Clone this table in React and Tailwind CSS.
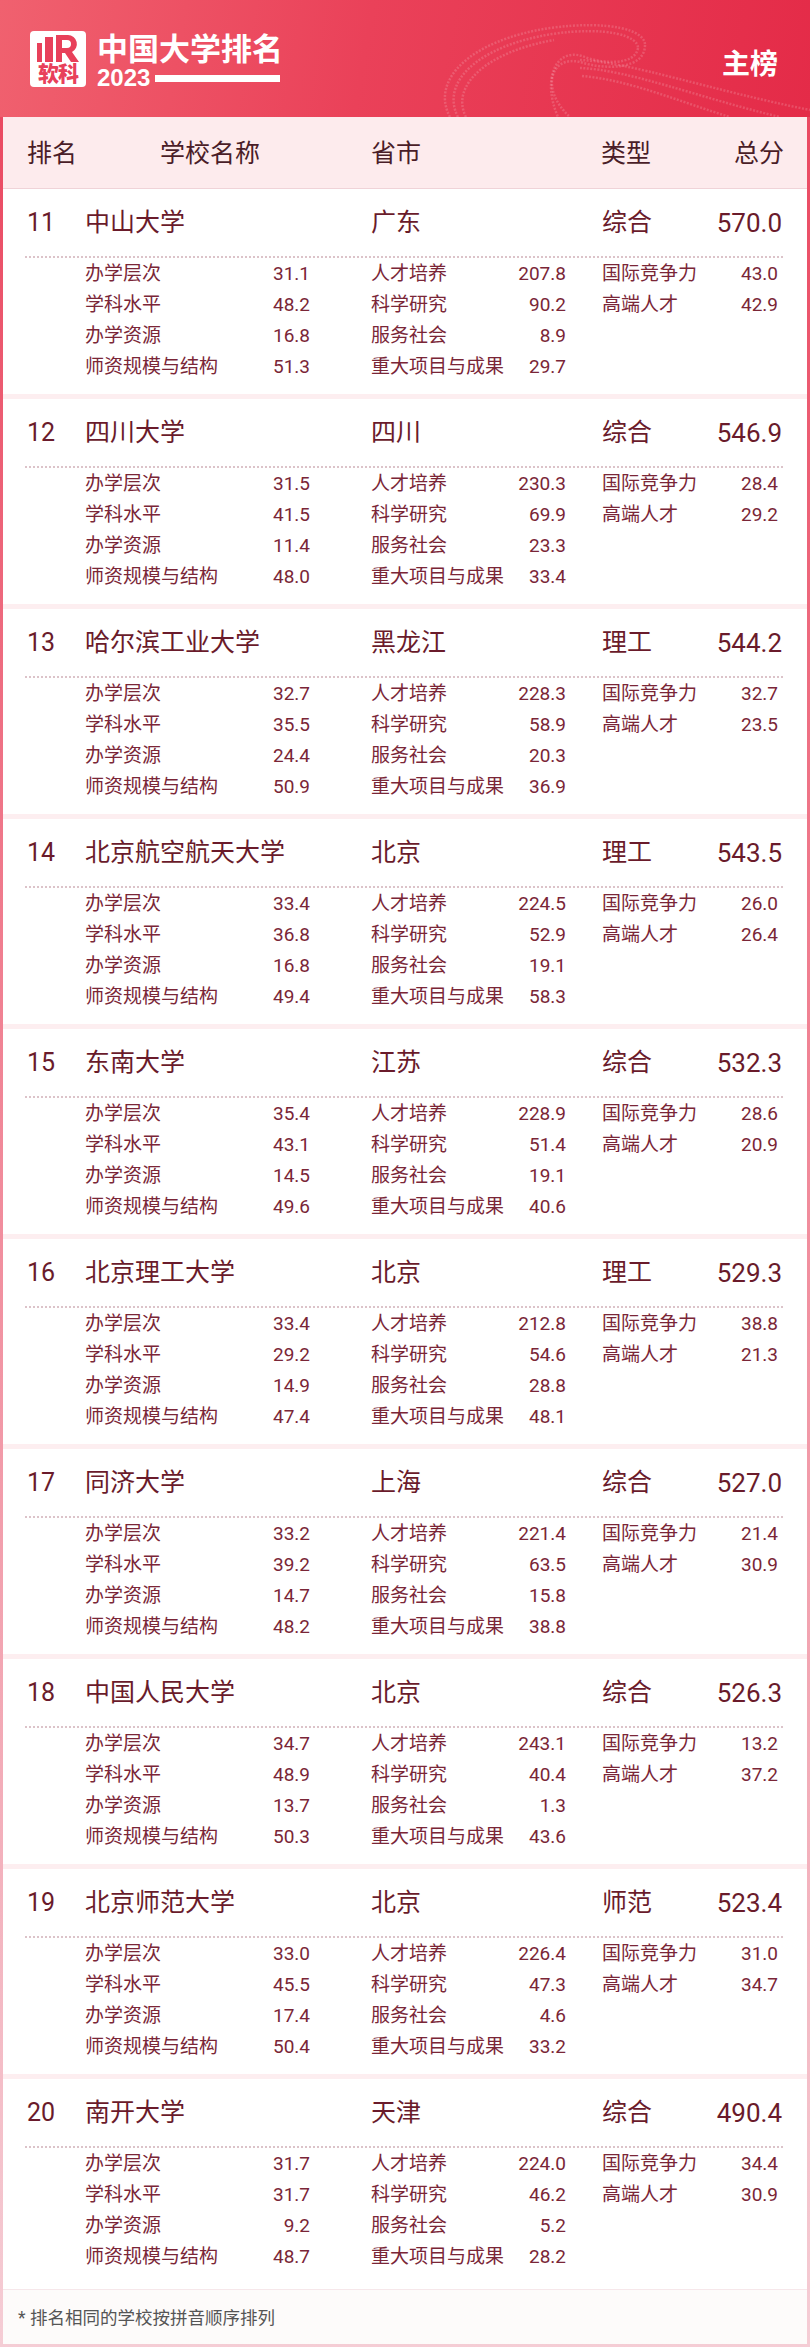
import React from 'react';

const rows = [
  ['11', '中山大学', '广东', '综合', '570.0', ['31.1', '48.2', '16.8', '51.3'], ['207.8', '90.2', '8.9', '29.7'], ['43.0', '42.9']],
  ['12', '四川大学', '四川', '综合', '546.9', ['31.5', '41.5', '11.4', '48.0'], ['230.3', '69.9', '23.3', '33.4'], ['28.4', '29.2']],
  ['13', '哈尔滨工业大学', '黑龙江', '理工', '544.2', ['32.7', '35.5', '24.4', '50.9'], ['228.3', '58.9', '20.3', '36.9'], ['32.7', '23.5']],
  ['14', '北京航空航天大学', '北京', '理工', '543.5', ['33.4', '36.8', '16.8', '49.4'], ['224.5', '52.9', '19.1', '58.3'], ['26.0', '26.4']],
  ['15', '东南大学', '江苏', '综合', '532.3', ['35.4', '43.1', '14.5', '49.6'], ['228.9', '51.4', '19.1', '40.6'], ['28.6', '20.9']],
  ['16', '北京理工大学', '北京', '理工', '529.3', ['33.4', '29.2', '14.9', '47.4'], ['212.8', '54.6', '28.8', '48.1'], ['38.8', '21.3']],
  ['17', '同济大学', '上海', '综合', '527.0', ['33.2', '39.2', '14.7', '48.2'], ['221.4', '63.5', '15.8', '38.8'], ['21.4', '30.9']],
  ['18', '中国人民大学', '北京', '综合', '526.3', ['34.7', '48.9', '13.7', '50.3'], ['243.1', '40.4', '1.3', '43.6'], ['13.2', '37.2']],
  ['19', '北京师范大学', '北京', '师范', '523.4', ['33.0', '45.5', '17.4', '50.4'], ['226.4', '47.3', '4.6', '33.2'], ['31.0', '34.7']],
  ['20', '南开大学', '天津', '综合', '490.4', ['31.7', '31.7', '9.2', '48.7'], ['224.0', '46.2', '5.2', '28.2'], ['34.4', '30.9']],
];

const labels1 = ['办学层次', '学科水平', '办学资源', '师资规模与结构'];
const labels2 = ['人才培养', '科学研究', '服务社会', '重大项目与成果'];
const labels3 = ['国际竞争力', '高端人才'];

const font = { fontFamily: '"Roboto", "Noto Sans CJK SC", sans-serif' };

function Logo() {
  return (
    <div className="w-[56px] h-[56px] bg-white rounded-[4px] flex flex-col items-center pt-[4px]">
      <svg width="46" height="27" viewBox="0 0 46 27">
        <rect x="2" y="8" width="5" height="19" fill="#e8405a" />
        <rect x="10" y="2" width="8" height="25" fill="#e8405a" />
        <path d="M21 0 h12 a9 9 0 0 1 4 17 l7 10 h-8 l-6 -9 h-3 v9 h-6 z M27 5 v8 h5 a4 4 0 0 0 0 -8 z" fill="#e8405a" fillRule="evenodd" />
      </svg>
      <div className="text-[21px] leading-[24px] font-black text-[#e8405a] tracking-[-1px]">软科</div>
    </div>
  );
}

function Ribbon() {
  return (
    <svg className="absolute left-[430px] top-0" width="380" height="117" viewBox="0 0 380 117">
      <g fill="none" stroke="rgba(255,255,255,0.16)" strokeWidth="2.5" strokeDasharray="2 1.5">
        <path d="M20 117 C 0 80, 40 40, 120 28 C 180 20, 215 30, 215 45" />
        <path d="M28 117 C 10 82, 48 46, 122 34 C 178 26, 208 36, 208 48" />
        <path d="M36 117 C 20 86, 56 52, 124 40" />
        <path d="M215 45 C 215 70, 175 70, 150 62 C 120 55, 110 90, 140 117" />
        <path d="M208 48 C 205 66, 172 64, 152 56 C 125 48, 112 80, 128 117" />
        <path d="M150 60 C 200 62, 280 90, 380 110" />
        <path d="M150 68 C 200 70, 270 98, 350 117" />
        <path d="M152 76 C 200 80, 250 102, 300 117" />
      </g>
    </svg>
  );
}

function Detail({ labels, values, w }) {
  return (
    <div className={w}>
      {labels.map((l, i) =>
        values[i] !== undefined ? (
          <div key={l} className="flex justify-between h-[31px] leading-[31px] items-center">
            <span>{l}</span>
            <span>{values[i]}</span>
          </div>
        ) : null
      )}
    </div>
  );
}

export default function App() {
  return (
    <div className="w-[810px] bg-[linear-gradient(180deg,#e9425b,#f07d8f_40%,#f5cdd5)] px-[3px] pb-[3px]" style={font}>
      <header className="-mx-[3px] h-[117px] relative overflow-hidden bg-[linear-gradient(100deg,#f0616f,#ea4159_45%,#e42b48)] flex items-start justify-between px-[30px] pt-[31px]">
        <Ribbon />
        <div className="relative flex gap-[11px]">
          <Logo />
          <div className="flex flex-col text-white font-bold">
            <div className="text-[31px] leading-[32px] mt-[3px]">中国大学排名</div>
            <div className="flex items-center gap-[5px]">
              <span className="text-[24px] leading-[24px] font-bold" style={{ fontFamily: '"Liberation Sans", sans-serif' }}>2023</span>
              <span className="w-[125px] h-[7px] bg-white"></span>
            </div>
          </div>
        </div>
        <div className="relative text-white text-[28px] font-bold mt-[13px] mr-[2px]">主榜</div>
      </header>

      <div className="bg-white">
        <div className="h-[72px] pt-[3px] bg-[#fdebed] border-b border-[#f0d3d8] grid grid-cols-[133px_211px_230px_1fr_auto] items-center pl-[24px] pr-[23px] text-[25px] leading-[32px] text-[#4a1d28]">
          <span>排名</span>
          <span>学校名称</span>
          <span>省市</span>
          <span>类型</span>
          <span>总分</span>
        </div>

        {rows.map((r, idx) => (
          <div key={r[0]}>
            <div className={idx === rows.length - 1 ? 'pt-[18px] pb-[17px]' : 'pt-[18px] pb-[12px]'}>
              <div className="grid grid-cols-[58px_286px_231px_1fr_auto] items-center h-[32px] leading-[32px] pl-[24px] pr-[25px] text-[25px] text-[#6a1b2b]">
                <span>{r[0]}</span>
                <span>{r[1]}</span>
                <span>{r[2]}</span>
                <span>{r[3]}</span>
                <span className="text-[26px]">{r[4]}</span>
              </div>
              <div className="mt-[17px] ml-[22px] mr-[24px] border-t-2 border-dotted border-[#dcc3c9]"></div>
              <div className="flex pl-[82px] text-[19px] text-[#7a2637]">
                <Detail labels={labels1} values={r[5]} w="w-[225px]" />
                <div className="w-[61px]"></div>
                <Detail labels={labels2} values={r[6]} w="w-[195px]" />
                <div className="w-[36px]"></div>
                <Detail labels={labels3} values={r[7]} w="w-[176px]" />
              </div>
            </div>
            {idx !== rows.length - 1 && <div className="h-[5px] bg-[#fdeef0]"></div>}
          </div>
        ))}

        <div className="h-[55px] border-t border-[#f6e7ea] bg-[#fdfbfa] flex items-center pl-[15px] pt-[2px] text-[17.5px] text-[#555]">
          * 排名相同的学校按拼音顺序排列
        </div>
      </div>
    </div>
  );
}
